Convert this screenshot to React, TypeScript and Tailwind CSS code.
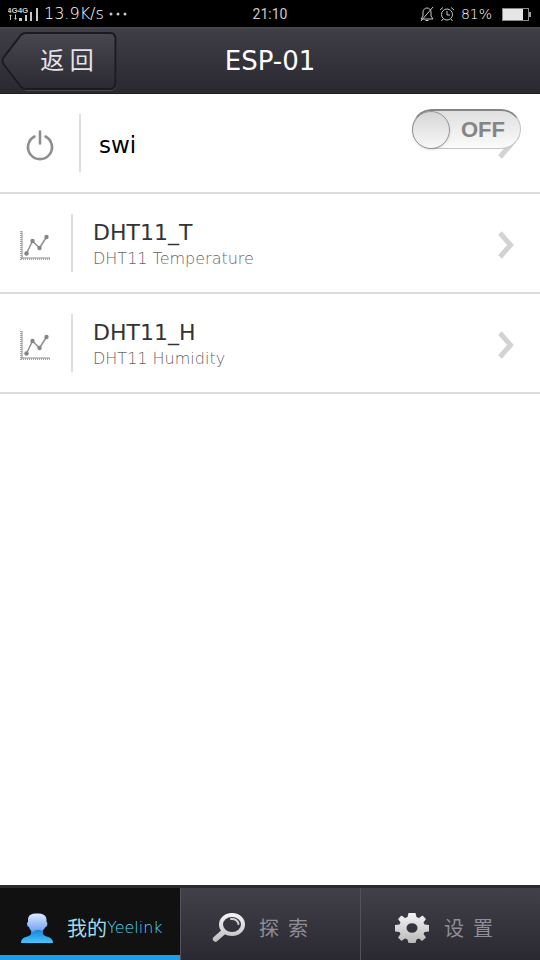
import { useState } from "react";

const sensores = [
  { titulo: "DHT11_T", descripcion: "DHT11 Temperature" },
  { titulo: "DHT11_H", descripcion: "DHT11 Humidity" },
];

function Chevron() {
  return (
    <svg className="h-8 w-5 shrink-0" viewBox="0 0 20 32" fill="none">
      <path d="M4 4 L14.500 16 L4 28" stroke="#d3d3d3" strokeWidth="5" />
    </svg>
  );
}

function ChartIcon() {
  return (
    <svg className="h-8 w-8 shrink-0" viewBox="0 0 32 32" fill="none" stroke="#8f8f8f">
      <path d="M3 2V30M2 29H31" strokeWidth="1" />
      <path d="M2 2V31M2 30H31" strokeWidth="2" strokeDasharray="1 1" stroke="#a5a5a5" />
      <path d="M7.500 24.500 L13.500 12 L20.500 19 L27.500 8" strokeWidth="1.500" />
      <g fill="#858585" stroke="none">
        <circle cx="7.500" cy="24.500" r="2.200" />
        <circle cx="13.500" cy="12" r="2.200" />
        <circle cx="20.500" cy="19" r="2.200" />
        <circle cx="27.500" cy="8" r="2.200" />
      </g>
    </svg>
  );
}

function PowerIcon() {
  return (
    <svg className="h-8 w-8 shrink-0" viewBox="0 0 32 32" fill="none" stroke="#8f8f8f" strokeWidth="2.600" strokeLinecap="round">
      <path d="M10.500 7.500 A12 12 0 1 0 21.500 7.500" />
      <path d="M16 2.500V14.500" />
    </svg>
  );
}

function UserIcon() {
  return (
    <svg className="h-8 w-8" viewBox="0 0 32 32">
      <defs>
        <linearGradient id="cara" x1="0" y1="0" x2="0" y2="1">
          <stop offset="0" stopColor="#dce8ff" />
          <stop offset="1" stopColor="#6d9fee" />
        </linearGradient>
        <linearGradient id="hombros" x1="0" y1="0" x2="0" y2="1">
          <stop offset="0" stopColor="#1579d4" />
          <stop offset="1" stopColor="#45c5ff" />
        </linearGradient>
      </defs>
      <path d="M10 16H22V22C23 25.500 32 23.500 32 31H0C0 23.500 9 25.500 10 22Z" fill="url(#hombros)" />
      <path d="M7 8C7 3 10 1.500 16 1.500S25.500 3 25.500 8V10C27 10 26.500 15 24.500 15C23.500 17 22 18 21 19C18 17 15 17.500 12 20C10 19 8.500 17 8 15C6 15 5.500 10 7 10Z" fill="url(#cara)" />
    </svg>
  );
}

function SearchIcon() {
  return (
    <svg className="h-8 w-[34px]" viewBox="0 0 34 32" fill="none">
      <defs>
        <linearGradient id="metal" x1="0" y1="0" x2="0" y2="32" gradientUnits="userSpaceOnUse">
          <stop offset="0" stopColor="#f8f8f8" />
          <stop offset="1" stopColor="#b9b9b9" />
        </linearGradient>
      </defs>
      <ellipse cx="21" cy="12.500" rx="11" ry="9.500" stroke="url(#metal)" strokeWidth="4" />
      <path d="M12.500 20 L4.500 27" stroke="url(#metal)" strokeWidth="5.500" strokeLinecap="round" />
      <path d="M20 7C24 6.500 27 9 27.500 12" stroke="#cfcfcf" strokeWidth="2" strokeLinecap="round" />
    </svg>
  );
}

function GearIcon() {
  return (
    <svg className="h-8 w-9" viewBox="-17 -16 34 32">
      <defs>
        <linearGradient id="engranaje" x1="0" y1="-15" x2="0" y2="15" gradientUnits="userSpaceOnUse">
          <stop offset="0" stopColor="#f4f4f4" />
          <stop offset="1" stopColor="#b9b9b9" />
        </linearGradient>
      </defs>
      <path
        fill="url(#engranaje)"
        fillRule="evenodd"
        d="M-3.500 -15H3.500L4.500 -11L7 -10L10.500 -12.500L14 -9L11.500 -5.500L12.500 -3.500L17 -3V3.500L12.500 4L11.500 6L14 9.500L10 13L7 10.500L4.500 11.500L3.500 15H-3.500L-4.500 11.500L-7 10.500L-10.500 13L-14 9.500L-11.500 6L-12.500 4L-17 3.500V-3L-12.500 -3.500L-11.500 -5.500L-14 -9L-10.500 -12.500L-7 -10L-4.500 -11ZM-5.500 0A5.500 4.800 0 1 0 5.500 0A5.500 4.800 0 1 0 -5.500 0Z"
      />
    </svg>
  );
}

function StatusBar() {
  return (
    <div className="grid h-[27px] grid-cols-3 items-center bg-black px-2 text-[#c8c8c8]">
      <div className="flex items-center">
        <svg className="h-4 w-8" viewBox="0 0 32 16" fill="#c8c8c8">
          <text x="-1" y="7" fontSize="8" fontWeight="700" fontFamily="Liberation Sans, sans-serif">4G4G</text>
          <path d="M1 10L2.500 8.500L4 10H3V14H2V10ZM7 8.500H8V12H9L7.500 14L6 12H7ZM11 12H14V15H11ZM17 9H19V15H17ZM22 6H24V15H22ZM28 2H30V15H28Z" />
        </svg>
        <span className="ml-1 text-base font-extralight text-white">13.9K/s</span>
        <svg className="ml-1 h-4 w-5" viewBox="0 0 20 16" fill="#c8c8c8">
          <circle cx="3" cy="8" r="1.500" />
          <circle cx="10" cy="8" r="1.500" />
          <circle cx="17" cy="8" r="1.500" />
        </svg>
      </div>
      <span className="text-center font-['Roboto',sans-serif] text-sm">21:10</span>
      <div className="flex items-center justify-end">
        <svg className="h-4 w-4" viewBox="0 0 16 16" fill="none" stroke="#c8c8c8">
          <path d="M2 13H14L12 10V6C12 3.500 10 2 8 2S4 3.500 4 6V10ZM6.500 14.500H9.500M14 1L2 15" />
        </svg>
        <svg className="ml-1 h-4 w-4" viewBox="0 0 16 16" fill="none" stroke="#c8c8c8">
          <circle cx="8" cy="8.500" r="5.500" />
          <path d="M8 5V9H11M1 4L4 1.500M12 1.500L15 4M4 13L2.500 15M12 13L13.500 15" />
        </svg>
        <span className="ml-1.5 text-sm font-extralight text-white">81%</span>
        <svg className="ml-2 h-4 w-8" viewBox="0 0 32 16" fill="none">
          <rect x="2.500" y="2.500" width="26" height="12" stroke="#8a8a8a" />
          <rect x="3" y="3" width="20" height="11" fill="#e6e6e6" />
          <rect x="29" y="6" width="2" height="5" fill="#a0a0a0" />
        </svg>
      </div>
    </div>
  );
}

const pestana =
  "flex h-full items-center border-l border-[#53525a] bg-linear-to-b from-[#42414a] to-[#2a2932] pt-2 text-[#8f8e98]";

export default function App() {
  const [encendido, setEncendido] = useState(false);

  return (
    <div className="flex min-h-screen flex-col bg-white font-['DejaVu_Sans','Noto_Sans_CJK_SC',sans-serif]">
      <StatusBar />
      <header className="grid h-[67px] grid-cols-[1fr_auto_1fr] items-center border-t-2 border-b border-t-[#46464c] border-b-[#1d1d22] bg-linear-to-b from-[#3f3e47] to-[#2a2932]">
        <button className="relative ml-px flex h-[60px] w-[116px] items-center justify-center pb-1 pl-4">
          <svg className="absolute inset-0 h-full w-full" viewBox="0 0 116 60" fill="none">
            <defs>
              <linearGradient id="boton" x1="0" y1="0" x2="0" y2="1">
                <stop offset="0" stopColor="#484750" />
                <stop offset="1" stopColor="#2b2a32" />
              </linearGradient>
            </defs>
            <path d="M25 3.500H109Q115 3.500 115 9.500V53.500Q115 59.500 109 59.500H25L19 56L3 35Q1 31 3 28L19 7Z" stroke="#4b4a52" strokeWidth="1" />
            <path d="M25 2H109Q114.500 2 114.500 8V52Q114.500 58 109 58H25Q22 58 20 56L3 34Q0 30 3 26L20 4Q22 2 25 2Z" fill="url(#boton)" stroke="#1b1a21" strokeWidth="2" />
          </svg>
          <span className="relative font-['Noto_Sans_CJK_SC',sans-serif] text-2xl text-[#e4e4e8]">返 回</span>
        </button>
        <h1 className="text-[26px] text-white">ESP-01</h1>
      </header>

      <main className="flex-1">
        <div className="relative flex h-[100px] items-center border-b-2 border-[#dcdcdc] px-6 pt-1">
          <PowerIcon />
          <div className="mt-4 ml-[23px] h-[58px] w-0.5 self-start bg-[#dedede]" />
          <h2 className="ml-[18px] flex-1 text-[23px] text-black">swi</h2>
          <Chevron />
          <label className="absolute top-[15px] right-[19px] flex h-10 w-[109px] cursor-pointer items-center rounded-full border border-t-2 border-[#c4c4c4] border-t-[#858585] bg-linear-to-b from-[#e0e0e0] to-[#fbfbfb]">
            <input
              type="checkbox"
              role="switch"
              aria-label="swi"
              className="peer sr-only"
              checked={encendido}
              onChange={(e) => setEncendido(e.target.checked)}
            />
            <span className="-ml-px h-[38px] w-[38px] rounded-full border border-[#959595] bg-linear-to-b from-[#d6d6d6] to-[#f8f8f8] shadow peer-checked:order-last" />
            <span className="flex-1 pr-1 text-center font-['Liberation_Sans',sans-serif] text-[22px] font-bold text-[#858585]">
              {encendido ? "ON" : "OFF"}
            </span>
          </label>
        </div>

        {sensores.map((sensor) => (
          <a
            key={sensor.titulo}
            href="#"
            className="flex h-[100px] items-center border-b-2 border-[#dcdcdc] pt-1 pr-6 pl-[19px]"
          >
            <ChartIcon />
            <div className="mt-4 ml-5 h-[58px] w-0.5 self-start bg-[#dedede]" />
            <div className="ml-5 flex-1">
              <h2 className="text-[22px] leading-7 text-[#333333]">{sensor.titulo}</h2>
              <p className="text-base leading-6 font-extralight text-[#666666]">{sensor.descripcion}</p>
            </div>
            <Chevron />
          </a>
        ))}
      </main>

      <nav className="grid h-[75px] grid-cols-3 border-t-3 border-[#292b2f] bg-[#111111] font-['Noto_Sans_CJK_SC',sans-serif] text-xl">
        <button className="flex h-full items-center border-b-5 border-[#1c9ee8] bg-[#111111] pt-3 pl-[21px]">
          <UserIcon />
          <span className="ml-[14px] flex items-center whitespace-nowrap text-[#9fdcee]">
            我的<span className="font-['DejaVu_Sans',sans-serif] text-base font-extralight text-[#55d5f5]">Yeelink</span>
          </span>
        </button>
        <button className={`${pestana} pl-[30px]`}>
          <SearchIcon />
          <span className="ml-[14px] whitespace-pre">探  索</span>
        </button>
        <button className={`${pestana} pl-[33px]`}>
          <GearIcon />
          <span className="ml-[14px] whitespace-pre">设  置</span>
        </button>
      </nav>
    </div>
  );
}
